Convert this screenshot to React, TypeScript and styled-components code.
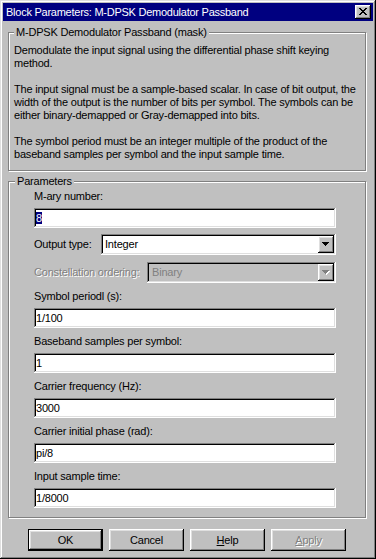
import React from "react";
import styled, { createGlobalStyle } from "styled-components";

const GlobalStyle = createGlobalStyle`
  html, body {
    margin: 0;
    padding: 0;
    background: #c0c0c0;
  }
  body {
    font-family: "Liberation Sans", Arial, sans-serif;
    font-size: 11px;
    letter-spacing: -0.2px;
    color: #000;
  }
`;

const raised = `
  box-shadow: inset -1px -1px #000, inset 1px 1px #fff,
    inset -2px -2px #808080, inset 2px 2px #dfdfdf;
`;

const sunken = `
  box-shadow: inset -1px -1px #fff, inset 1px 1px #808080,
    inset -2px -2px #dfdfdf, inset 2px 2px #000;
`;

/**
 * window chrome
 */
const Window = styled.div`
  width: 376px;
  height: 559px;
  box-sizing: border-box;
  padding: 3px;
  background: #c0c0c0;
  display: flex;
  flex-direction: column;
  box-shadow: inset -1px -1px #000, inset 1px 1px #dfdfdf,
    inset -2px -2px #808080, inset 2px 2px #fff;
`;

const TitleBar = styled.div`
  height: 18px;
  flex: none;
  background: #000080;
  color: #fff;
  display: flex;
  align-items: center;
  justify-content: space-between;
  padding: 0 2px 0 3px;
  letter-spacing: -0.25px;
`;

const CloseButton = styled.div`
  width: 16px;
  height: 14px;
  background: #c0c0c0;
  display: flex;
  align-items: center;
  justify-content: center;
  ${raised}
`;

const Body = styled.div`
  flex: 1;
  display: flex;
  flex-direction: column;
  padding: 11px 7px 0 5px;
`;

/**
 * group boxes
 */
const GroupBox = styled.div<{ $pad: string; $gap?: number }>`
  position: relative;
  border: 1px solid #808080;
  box-shadow: inset 1px 1px #fff, 1px 1px #fff;
  padding: ${({ $pad }) => $pad};
  margin-bottom: ${({ $gap }) => $gap ?? 0}px;
`;

const Legend = styled.span<{ $left: number }>`
  position: absolute;
  top: -7px;
  left: ${({ $left }) => $left}px;
  padding: 0 2px;
  line-height: 13px;
  background: #c0c0c0;
  white-space: nowrap;
`;

const Para = styled.p`
  margin: 0 0 13px;
  line-height: 13px;
  white-space: nowrap;

  &:last-child {
    margin-bottom: 0;
  }
`;

/**
 * fields
 */
const Field = styled.div<{ $gap: number }>`
  display: flex;
  flex-direction: column;
  margin-bottom: ${({ $gap }) => $gap}px;

  &:last-child {
    margin-bottom: 0;
  }
`;

const Label = styled.div<{ $disabled?: boolean; $width?: number }>`
  line-height: 13px;
  white-space: nowrap;
  flex: none;
  ${({ $width }) => ($width ? `width: ${$width}px;` : "margin-bottom: 5px;")}
  color: ${({ $disabled }) => ($disabled ? "#808080" : "#000")};
  text-shadow: ${({ $disabled }) => ($disabled ? "1px 1px #fff" : "none")};
`;

const TextBox = styled.div`
  height: 20px;
  box-sizing: border-box;
  background: #fff;
  padding: 0 2px;
  line-height: 20px;
  white-space: nowrap;
  ${sunken}
`;

const Selected = styled.span`
  background: #000080;
  color: #fff;
`;

const ComboRow = styled.div`
  display: flex;
  align-items: center;
  height: 21px;
  margin-bottom: 7px;
`;

const Combo = styled.div<{ $disabled?: boolean }>`
  flex: 1;
  height: 21px;
  box-sizing: border-box;
  padding: 2px;
  display: flex;
  background: ${({ $disabled }) => ($disabled ? "#c0c0c0" : "#fff")};
  ${sunken}
`;

const ComboText = styled.div<{ $disabled?: boolean }>`
  flex: 1;
  padding-left: ${({ $disabled }) => ($disabled ? 3 : 2)}px;
  line-height: 17px;
  color: ${({ $disabled }) => ($disabled ? "#808080" : "#000")};
`;

const DropButton = styled.div`
  width: 16px;
  height: 17px;
  background: #c0c0c0;
  display: flex;
  align-items: center;
  justify-content: center;
  ${raised}
`;

/**
 * dialog buttons
 */
const ButtonRow = styled.div`
  display: flex;
  justify-content: center;
  gap: 6px;
  margin-top: 11px;
`;

const Button = styled.div<{ $default?: boolean; $disabled?: boolean }>`
  width: 75px;
  height: 22px;
  box-sizing: border-box;
  display: flex;
  align-items: center;
  justify-content: center;
  background: #c0c0c0;
  color: ${({ $disabled }) => ($disabled ? "#808080" : "#000")};
  text-shadow: ${({ $disabled }) => ($disabled ? "1px 1px #fff" : "none")};
  ${({ $default }) =>
    $default
      ? `box-shadow: inset 0 0 0 1px #000, inset -2px -2px #000, inset 2px 2px #fff,
          inset -3px -3px #808080, inset 3px 3px #dfdfdf;`
      : raised}
`;

/**
 * glyphs
 */
const CLOSE_ROWS = ["##....##", ".##..##.", "..####..", "...##...", "..####..", ".##..##.", "##....##"];
const ARROW_ROWS = ["#######", ".#####.", "..###..", "...#..."];

function Pixels({ rows, color, shadow }: { rows: string[]; color: string; shadow?: string }) {
  const w = rows[0].length;
  const h = rows.length;
  const cells: React.ReactNode[] = [];
  rows.forEach((row, y) =>
    row.split("").forEach((c, x) => {
      if (c !== "#") return;
      if (shadow) cells.push(<rect key={`s${x}-${y}`} x={x + 1} y={y + 1} width={1} height={1} fill={shadow} />);
    })
  );
  rows.forEach((row, y) =>
    row.split("").forEach((c, x) => {
      if (c === "#") cells.push(<rect key={`${x}-${y}`} x={x} y={y} width={1} height={1} fill={color} />);
    })
  );
  return (
    <svg width={w + 1} height={h + 1} viewBox={`0 0 ${w + 1} ${h + 1}`} shapeRendering="crispEdges">
      {cells}
    </svg>
  );
}

const fields = [
  { label: "Symbol periodl (s):", value: "1/100" },
  { label: "Baseband samples per symbol:", value: "1" },
  { label: "Carrier frequency (Hz):", value: "3000" },
  { label: "Carrier initial phase (rad):", value: "pi/8" },
  { label: "Input sample time:", value: "1/8000" },
];

export default function App() {
  return (
    <>
      <GlobalStyle />
      <Window>
        <TitleBar>
          <span>Block Parameters: M-DPSK Demodulator Passband</span>
          <CloseButton>
            <Pixels rows={CLOSE_ROWS} color="#000" />
          </CloseButton>
        </TitleBar>
        <Body>
          <GroupBox $pad="11px 4px 9px 5px" $gap={10}>
            <Legend $left={5}>M-DPSK Demodulator Passband (mask)</Legend>
            <Para>
              Demodulate the input signal using the differential phase shift keying
              <br />
              method.
            </Para>
            <Para>
              The input signal must be a sample-based scalar. In case of bit output, the
              <br />
              width of the output is the number of bits per symbol. The symbols can be
              <br />
              either binary-demapped or Gray-demapped into bits.
            </Para>
            <Para>
              The symbol period must be an integer multiple of the product of the
              <br />
              baseband samples per symbol and the input sample time.
            </Para>
          </GroupBox>

          <GroupBox $pad="8px 29px 9px 25px">
            <Legend $left={6}>Parameters</Legend>
            <Field $gap={6}>
              <Label>M-ary number:</Label>
              <TextBox>
                <Selected>8</Selected>
              </TextBox>
            </Field>
            <ComboRow>
              <Label $width={67}>Output type:</Label>
              <Combo>
                <ComboText>Integer</ComboText>
                <DropButton>
                  <Pixels rows={ARROW_ROWS} color="#000" />
                </DropButton>
              </Combo>
            </ComboRow>
            <ComboRow>
              <Label $width={113} $disabled>
                Constellation ordering:
              </Label>
              <Combo $disabled>
                <ComboText $disabled>Binary</ComboText>
                <DropButton>
                  <Pixels rows={ARROW_ROWS} color="#808080" shadow="#fff" />
                </DropButton>
              </Combo>
            </ComboRow>
            {fields.map((f) => (
              <Field key={f.label} $gap={7}>
                <Label>{f.label}</Label>
                <TextBox>{f.value}</TextBox>
              </Field>
            ))}
          </GroupBox>

          <ButtonRow>
            <Button $default>OK</Button>
            <Button>Cancel</Button>
            <Button>
              <span>
                <u>H</u>elp
              </span>
            </Button>
            <Button $disabled>
              <span>
                <u>A</u>pply
              </span>
            </Button>
          </ButtonRow>
        </Body>
      </Window>
    </>
  );
}
